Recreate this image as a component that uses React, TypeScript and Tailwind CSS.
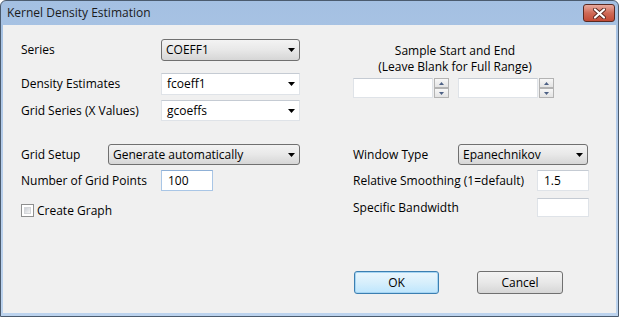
import React from 'react';

const font = { fontFamily: '"Open Sans", "Noto Sans", sans-serif' };

function Arrow() {
  return (
    <svg width="7" height="4" viewBox="0 0 7 4" className="shrink-0">
      <polygon points="0,0 7,0 3.5,4" fill="#000" />
    </svg>
  );
}

function DropList({ value, width }: { value: string; width: string }) {
  return (
    <div
      className={`${width} h-full flex items-center justify-between pl-[4px] pr-[4px] rounded-[3px] border border-[#707070] bg-gradient-to-b from-[#f3f3f3] via-[#e8e8e8] to-[#d6d6d6]`}
    >
      <span>{value}</span>
      <Arrow />
    </div>
  );
}

function EditCombo({ value }: { value: string }) {
  return (
    <div className="w-[139px] h-full flex items-center justify-between pl-[5px] pr-[4px] bg-white border border-[#dfe3e8] border-t-[#c5cbd3]">
      <span>{value}</span>
      <Arrow />
    </div>
  );
}

function TextBox({ value = '', width, blue = false }: { value?: string; width: string; blue?: boolean }) {
  return (
    <div
      className={`${width} h-full flex items-center pl-[6px] bg-white border ${
        blue ? 'border-[#a9c6e6] border-t-[#8fb0d6]' : 'border-[#dfe3e8] border-t-[#c5cbd3]'
      }`}
    >
      {value}
    </div>
  );
}

function SpinBtn({ up }: { up: boolean }) {
  return (
    <div className="w-[15px] h-[10px] flex items-center justify-center border border-[#b3b3b3] bg-gradient-to-b from-[#f7f7f7] to-[#e4e4e4]">
      <svg width="5" height="3" viewBox="0 0 5 3">
        <polygon points={up ? '0,3 5,3 2.5,0' : '0,0 5,0 2.5,3'} fill="#4d6185" />
      </svg>
    </div>
  );
}

function SpinField() {
  return (
    <div className="flex h-[20px]">
      <TextBox width="w-[80px]" />
      <div className="flex flex-col ml-[1px] gap-[0px]">
        <SpinBtn up />
        <SpinBtn up={false} />
      </div>
    </div>
  );
}

export default function App() {
  return (
    <div className="w-[619px] h-[317px] bg-white text-[12px] text-black" style={font}>
      <div className="w-[619px] h-[317px] flex flex-col rounded-t-[6px] border border-[#4b5b6e] bg-gradient-to-b from-[#a4c0e2] via-[#b6cdea] to-[#bcd3ee] overflow-hidden">
        {/* title bar */}
        <div className="h-[24px] flex items-start justify-between pl-[6px] pr-[3px] shrink-0">
          <span className="self-center text-[#1b1b1b] text-[12px] leading-none">Kernel Density Estimation</span>
          <div className="mt-[3px] w-[32px] h-[18px] rounded-[3px] border border-[#5a2a22] bg-gradient-to-b from-[#e8aa9e] via-[#cf6a57] to-[#c24a35] flex items-center justify-center">
            <svg width="13" height="11" viewBox="0 0 13 11">
              <path d="M2 1.5 L11 9.5 M11 1.5 L2 9.5" stroke="#5b2a22" strokeWidth="4" strokeLinecap="round" />
              <path d="M2 1.5 L11 9.5 M11 1.5 L2 9.5" stroke="#ffffff" strokeWidth="2.2" strokeLinecap="round" />
            </svg>
          </div>
        </div>

        {/* client */}
        <div className="flex-1 mx-[2px] mb-[3px] bg-[#f0f0f0] flex flex-col pt-[14px]">
          {/* top section */}
          <div className="flex">
            <div className="w-[279px] ml-[18px] flex flex-col">
              <div className="h-[22px] flex items-center">
                <span className="w-[140px]">Series</span>
                <DropList value="COEFF1" width="w-[139px]" />
              </div>
              <div className="h-[22px] mt-[12px] flex items-center">
                <span className="w-[140px]">Density Estimates</span>
                <EditCombo value="fcoeff1" />
              </div>
              <div className="h-[21px] mt-[5px] flex items-center">
                <span className="w-[140px]">Grid Series (X Values)</span>
                <EditCombo value="gcoeffs" />
              </div>
            </div>
            <div className="ml-[53px] w-[204px] flex flex-col">
              <div className="mt-[4px] text-center leading-[16px]">
                <div>Sample Start and End</div>
                <div>(Leave Blank for Full Range)</div>
              </div>
              <div className="mt-[3px] flex gap-[9px]">
                <SpinField />
                <SpinField />
              </div>
            </div>
          </div>

          {/* second section */}
          <div className="flex mt-[23px]">
            <div className="w-[279px] ml-[18px] flex flex-col">
              <div className="h-[21px] flex items-center">
                <span className="w-[87px]">Grid Setup</span>
                <DropList value="Generate automatically" width="w-[192px]" />
              </div>
              <div className="h-[21px] mt-[5px] flex items-center">
                <span className="w-[140px]">Number of Grid Points</span>
                <TextBox value="100" width="w-[52px]" blue />
              </div>
              <div className="h-[13px] mt-[13px] flex items-center">
                <div className="w-[13px] h-[13px] border border-[#8e8f8f] bg-white p-[2px]">
                  <div className="w-full h-full bg-gradient-to-br from-[#cbcfd5] to-[#f6f6f6] border border-[#d4d6d9]" />
                </div>
                <span className="ml-[3px]">Create Graph</span>
              </div>
            </div>
            <div className="ml-[53px] flex flex-col">
              <div className="h-[21px] flex items-center">
                <span className="w-[105px]">Window Type</span>
                <DropList value="Epanechnikov" width="w-[130px]" />
              </div>
              <div className="h-[21px] mt-[5px] flex items-center">
                <span className="w-[184px]">Relative Smoothing (1=default)</span>
                <TextBox value="1.5" width="w-[52px]" />
              </div>
              <div className="h-[19px] mt-[7px] flex items-center">
                <span className="w-[184px]">Specific Bandwidth</span>
                <TextBox width="w-[52px]" />
              </div>
            </div>
          </div>

          {/* buttons */}
          <div className="flex mt-[54px] pl-[351px] gap-[38px]">
            <button className="w-[85px] h-[23px] rounded-[3px] border border-[#3c7fb1] bg-gradient-to-b from-[#eaf6fd] via-[#d7effc] to-[#bee6fd] shadow-[inset_0_0_0_1px_#a6d5f3]">
              OK
            </button>
            <button className="w-[86px] h-[23px] rounded-[3px] border border-[#707070] bg-gradient-to-b from-[#f3f3f3] via-[#e8e8e8] to-[#d6d6d6]">
              Cancel
            </button>
          </div>
        </div>
      </div>
    </div>
  );
}
